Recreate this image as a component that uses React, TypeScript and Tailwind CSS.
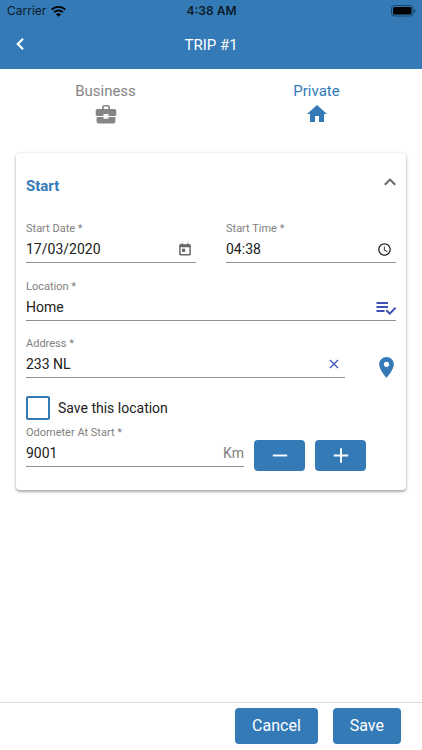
import { useState } from "react";
import type { ReactNode } from "react";
import { MdAccessTime, MdHome } from "react-icons/md";

type TripKind = "business" | "private";

interface FieldProps {
  id: string;
  label: string;
  value: string;
  onChange: (value: string) => void;
  className?: string;
  children?: ReactNode;
}

function Field({ id, label, value, onChange, className = "", children }: FieldProps) {
  return (
    <div className={`min-w-0 ${className}`}>
      <label htmlFor={id} className="block text-[11px] leading-[18px] text-[#808080]">
        {label} *
      </label>
      <div className="flex h-[25px] items-center border-b border-[#8f8f8f] pb-0.5">
        <input
          id={id}
          type="text"
          required
          value={value}
          onChange={(e) => onChange(e.target.value)}
          className="w-full min-w-0 flex-1 bg-transparent text-sm text-[#212121] outline-none"
        />
        {children}
      </div>
    </div>
  );
}

function WifiIcon() {
  return (
    <svg viewBox="0 0 30 22" className="h-[11px] w-[15px]" fill="#000" aria-hidden>
      <path d="M15 0C9.200 0 4 2.200 0 6l2.600 2.700C6 5.500 10.300 3.700 15 3.700s9 1.800 12.400 5L30 6C26 2.200 20.800 0 15 0z" />
      <path d="M15 7.200c-3.900 0-7.400 1.500-10.100 4l2.700 2.800c2-1.800 4.600-2.900 7.400-2.900s5.400 1.100 7.400 2.900l2.700-2.800c-2.700-2.500-6.200-4-10.100-4z" />
      <path d="M15 14.300c-2 0-3.700.7-5.100 2L15 21.700l5.100-5.400c-1.400-1.300-3.100-2-5.100-2z" />
    </svg>
  );
}

function BatteryIcon() {
  return (
    <svg viewBox="0 0 25 12" className="h-3 w-[25px]" aria-hidden>
      <rect x="0.500" y="0.500" width="21.500" height="10.500" rx="3" fill="none" stroke="#1c456a" />
      <rect x="2" y="2" width="18.500" height="7.500" rx="1.600" fill="#000" />
      <path d="M23.200 4v4c.8-.3 1.300-1.100 1.300-2s-.5-1.700-1.300-2z" fill="#1c456a" />
    </svg>
  );
}

function BriefcaseIcon() {
  return (
    <svg viewBox="0 0 24 24" className="h-6 w-6" fill="currentColor" aria-hidden>
      <path
        fillRule="evenodd"
        d="M8 7V5.600C8 4 9.100 3 10.600 3h2.800C14.900 3 16 4 16 5.600V7h4.300c1.100 0 2 .9 2 2v3.800c0 .7-.5 1.200-1.200 1.200H14.500v-2h-5v2H2.900c-.7 0-1.200-.5-1.200-1.200V9c0-1.100.9-2 2-2zm1.700 0h4.600V5.800c0-.7-.4-1.200-1.100-1.200h-2.400c-.7 0-1.100.5-1.100 1.200z"
      />
      <path d="M2.600 15h6.900v1.700h5V15h6.900v4.600c0 1.100-.9 2-2 2H4.600c-1.100 0-2-.9-2-2z" />
    </svg>
  );
}

function CalendarIcon() {
  return (
    <svg viewBox="0 0 24 24" className="h-3.5 w-3.5" fill="currentColor" aria-hidden>
      <path
        fillRule="evenodd"
        d="M20 4h-2V2h-2.500v2h-7V2H6v2H4c-1.100 0-2 .9-2 2v15c0 1.100.9 2 2 2h16c1.100 0 2-.9 2-2V6c0-1.100-.9-2-2-2zM4.500 9h15v11.500h-15z"
      />
      <path d="M6.800 11.500h5.500V17H6.800z" />
    </svg>
  );
}

function ListCheckIcon() {
  return (
    <svg viewBox="0 0 20 14" className="h-3.5 w-5" fill="none" stroke="currentColor" aria-hidden>
      <path d="M0.500 2H12M0.500 6H12M0.500 10H8.500" strokeWidth="1.800" />
      <path d="M10.300 9.200l3.500 3.400 5.800-5.800" strokeWidth="2" />
    </svg>
  );
}

export default function App() {
  const [kind, setKind] = useState<TripKind>("private");
  const [open, setOpen] = useState(true);
  const [date, setDate] = useState("17/03/2020");
  const [time, setTime] = useState("04:38");
  const [location, setLocation] = useState("Home");
  const [address, setAddress] = useState("233 NL");
  const [saveLocation, setSaveLocation] = useState(false);
  const [odometer, setOdometer] = useState("9001");

  const step = (delta: number) => setOdometer(String(Number(odometer) + delta));

  return (
    <div className="flex min-h-screen flex-col bg-white font-['Roboto',sans-serif]">
      <header className="bg-[#337ab7]">
        <div className="grid h-[22px] grid-cols-3 items-center pl-[7px] pr-1.5 font-['Inter',sans-serif] text-xs text-[#0b1a28]">
          <div className="flex items-center gap-[5px]">
            <span>Carrier</span>
            <WifiIcon />
          </div>
          <span className="text-center font-semibold">4:38 AM</span>
          <div className="flex justify-end">
            <BatteryIcon />
          </div>
        </div>
        <div className="grid h-[47px] grid-cols-[40px_1fr_40px] items-center text-white">
          <button type="button" aria-label="Back" className="flex h-full items-center pb-1 pl-4">
            <svg viewBox="0 0 8 12" className="h-3 w-2" fill="none" stroke="currentColor" strokeWidth="2.200" aria-hidden>
              <path d="M7 0.800L1.800 6 7 11.200" />
            </svg>
          </button>
          <h1 className="text-center text-[15px]">TRIP #1</h1>
        </div>
      </header>

      <main className="flex-1">
        <nav className="grid grid-cols-2 pt-3 text-[15px] leading-[21px]">
          <button
            type="button"
            aria-pressed={kind === "business"}
            onClick={() => setKind("business")}
            className={`flex flex-col items-center ${kind === "business" ? "text-[#337ab7]" : "text-[#858585]"}`}
          >
            Business
            <BriefcaseIcon />
          </button>
          <button
            type="button"
            aria-pressed={kind === "private"}
            onClick={() => setKind("private")}
            className={`flex flex-col items-center ${kind === "private" ? "text-[#337ab7]" : "text-[#858585]"}`}
          >
            Private
            <MdHome className="h-6 w-6" />
          </button>
        </nav>

        <section className="mx-4 mt-[27px] rounded bg-white px-2.5 pb-[19px] shadow-[0_2px_3px_rgba(0,0,0,0.3),0_0_3px_rgba(0,0,0,0.12)]">
          <button
            type="button"
            aria-expanded={open}
            onClick={() => setOpen(!open)}
            className="flex h-[66px] w-full items-center justify-between"
          >
            <span className="text-[15px] font-bold text-[#337ab7]">Start</span>
            <svg
              viewBox="0 0 12 8"
              className={`mb-2 h-2 w-3 text-[#666] ${open ? "" : "rotate-180"}`}
              fill="none"
              stroke="currentColor"
              strokeWidth="2"
              aria-hidden
            >
              <path d="M0.800 6.800L6 1.600l5.200 5.200" />
            </svg>
          </button>

          {open && (
            <form id="trip-form" onSubmit={(e) => e.preventDefault()} className="pt-px">
              <div className="grid grid-cols-2 gap-[30px]">
                <Field id="date" label="Start Date" value={date} onChange={setDate}>
                  <button type="button" aria-label="Pick a date" className="mr-1 text-[#666]">
                    <CalendarIcon />
                  </button>
                </Field>
                <Field id="time" label="Start Time" value={time} onChange={setTime}>
                  <button type="button" aria-label="Pick a time" className="mr-1 text-[#212121]">
                    <MdAccessTime className="h-[15px] w-[15px]" />
                  </button>
                </Field>
              </div>

              <Field id="location" label="Location" value={location} onChange={setLocation} className="mt-[15px]">
                <button type="button" aria-label="Choose a location" className="pt-0.5 text-[#3f51b5]">
                  <ListCheckIcon />
                </button>
              </Field>

              <div className="mt-3.5 flex items-end">
                <Field id="address" label="Address" value={address} onChange={setAddress} className="flex-1">
                  <button
                    type="button"
                    aria-label="Clear address"
                    onClick={() => setAddress("")}
                    className="mr-1.5 text-[#3f51b5]"
                  >
                    <svg viewBox="0 0 10 10" className="h-2.5 w-2.5" stroke="currentColor" strokeWidth="1.300" aria-hidden>
                      <path d="M1 1l8 8M9 1L1 9" />
                    </svg>
                  </button>
                </Field>
                <button type="button" aria-label="Show on map" className="flex w-[51px] justify-end text-[#337ab7]">
                  <svg viewBox="5 2 14 20" className="mr-0.5 h-[21px] w-[15px]" fill="currentColor" aria-hidden>
                    <path d="M12 2C8.130 2 5 5.130 5 9c0 5.250 7 13 7 13s7-7.750 7-13c0-3.870-3.130-7-7-7zm0 9.500a2.500 2.500 0 110-5 2.500 2.500 0 010 5z" />
                  </svg>
                </button>
              </div>

              <label className="mt-[18px] flex items-center gap-2 text-sm leading-6 text-[#212121]">
                <input
                  type="checkbox"
                  checked={saveLocation}
                  onChange={(e) => setSaveLocation(e.target.checked)}
                  className="h-6 w-6 appearance-none rounded-[2px] border-2 border-[#337ab7] checked:bg-[#337ab7]"
                />
                Save this location
              </label>

              <div className="mt-1 flex items-end gap-2.5">
                <Field id="odometer" label="Odometer At Start" value={odometer} onChange={setOdometer} className="flex-1 pb-1">
                  <span className="text-sm text-[#808080]">Km</span>
                </Field>
                <button
                  type="button"
                  aria-label="Decrease"
                  onClick={() => step(-1)}
                  className="flex h-[31px] w-[51px] items-center justify-center rounded bg-[#337ab7] text-white"
                >
                  <svg viewBox="0 0 16 16" className="h-4 w-4" stroke="currentColor" strokeWidth="1.900" aria-hidden>
                    <path d="M0.800 7.500h14.400" />
                  </svg>
                </button>
                <button
                  type="button"
                  aria-label="Increase"
                  onClick={() => step(1)}
                  className="mr-[30px] flex h-[31px] w-[51px] items-center justify-center rounded bg-[#337ab7] text-white"
                >
                  <svg viewBox="0 0 16 16" className="h-4 w-4" stroke="currentColor" strokeWidth="1.900" aria-hidden>
                    <path d="M0.800 7.500h14.400M8 0.300v14.400" />
                  </svg>
                </button>
              </div>
            </form>
          )}
        </section>
      </main>

      <footer className="flex justify-end gap-[15px] border-t border-[#dcdcdc] pb-1.5 pr-[21px] pt-[5px] text-base text-white">
        <button type="button" className="h-9 rounded bg-[#337ab7] px-[17px]">
          Cancel
        </button>
        <button type="submit" form="trip-form" className="h-9 rounded bg-[#337ab7] px-[17px]">
          Save
        </button>
      </footer>
    </div>
  );
}
